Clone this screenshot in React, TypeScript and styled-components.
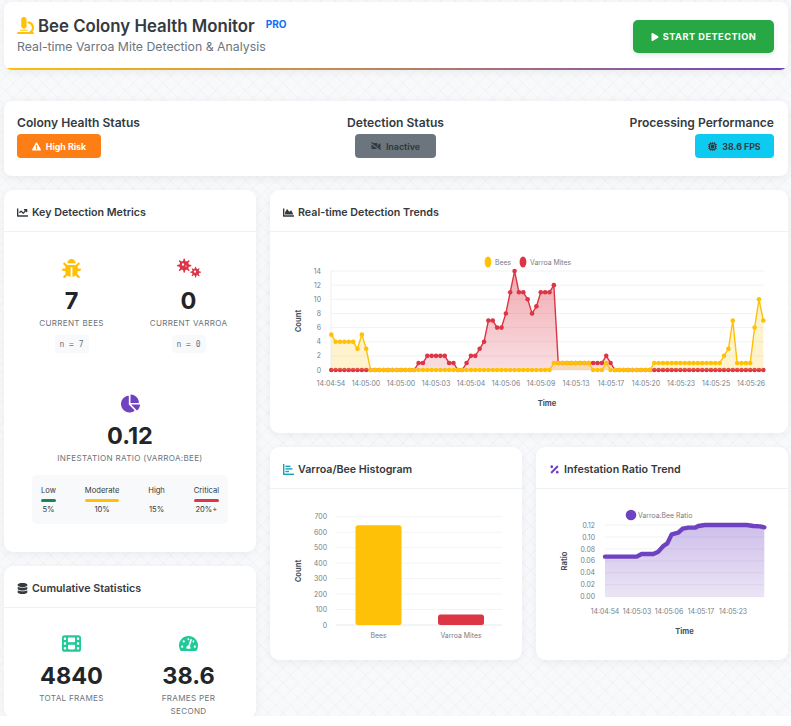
import React from "react";
import styled, { createGlobalStyle } from "styled-components";
import {
  FaBug,
  FaChartArea,
  FaChartLine,
  FaChartPie,
  FaDatabase,
  FaExclamationTriangle,
  FaMicroscope,
  FaPercentage,
  FaPlay,
  FaTachometerAlt,
  FaVideoSlash,
  FaViruses,
} from "react-icons/fa";
import { FaFilm, FaMicrochip } from "react-icons/fa6";

const FONT = `"Inter", "Noto Sans", sans-serif`;

const GlobalStyle = createGlobalStyle`
  html, body { margin: 0; padding: 0; background: #fff; }
  body { font-family: ${FONT}; color: #212529; }
  * { box-sizing: border-box; }
`;

const Page = styled.div`
  height: 716px;
  overflow: hidden;
  padding: 2px 3px 0 4px;
  background-color: #f8f9fb;
  background-image:
    repeating-linear-gradient(45deg, rgba(190, 198, 210, 0) 0, rgba(190, 198, 210, 0.1) 1px, rgba(190, 198, 210, 0) 2px, transparent 10.6px),
    repeating-linear-gradient(-45deg, rgba(190, 198, 210, 0) 0, rgba(190, 198, 210, 0.1) 1px, rgba(190, 198, 210, 0) 2px, transparent 10.6px);
`;

const Header = styled.header`
  height: 68px;
  padding: 0 14px 0 13px;
  display: flex;
  align-items: center;
  justify-content: space-between;
  background: #fff;
  border-radius: 8px;
  position: relative;
  overflow: hidden;
  box-shadow: 0 2px 8px rgba(0, 0, 0, 0.06);
  &::after {
    content: "";
    position: absolute;
    left: 0;
    right: 0;
    bottom: 0;
    height: 2px;
    background: linear-gradient(90deg, #ffc107, #6f42c1);
  }
`;

const Heading = styled.div`
  margin-bottom: 4px;
`;

const TitleRow = styled.div`
  display: flex;
  align-items: center;
  color: #ffc107;
  font-size: 17px;
`;

const Title = styled.h1`
  margin: 0 0 0 4px;
  font-size: 16.8px;
  line-height: 24px;
  font-weight: 600;
  color: #343a40;
`;

const ProTag = styled.span`
  margin: -3px 0 0 11px;
  font-size: 10px;
  font-weight: 700;
  color: #0d6efd;
`;

const Subtitle = styled.p`
  margin: 1px 0 0;
  font-size: 12.3px;
  line-height: 16px;
  color: #6c757d;
`;

const StartButton = styled.button`
  width: 141px;
  height: 33px;
  margin-top: 1px;
  display: flex;
  align-items: center;
  justify-content: center;
  gap: 4px;
  border: 0;
  border-radius: 5px;
  background: #28a745;
  color: #fff;
  font: 700 9.2px ${FONT};
  letter-spacing: 0.5px;
  box-shadow: 0 2px 5px rgba(0, 0, 0, 0.1);
`;

const StatusCard = styled.section`
  height: 75px;
  margin-top: 31px;
  padding: 13px 14px 0 13px;
  display: grid;
  grid-template-columns: 1fr 1fr 1fr;
  background: #fff;
  border-radius: 8px;
  box-shadow: 0 2px 10px rgba(0, 0, 0, 0.07);
`;

const StatusColumn = styled.div<{ $align: string }>`
  display: flex;
  flex-direction: column;
  align-items: ${(p) => p.$align};
`;

const StatusLabel = styled.div`
  font-size: 12.1px;
  line-height: 17px;
  font-weight: 600;
  color: #343a40;
`;

const Badge = styled.div<{ $bg: string; $fg: string; $width: number }>`
  width: ${(p) => p.$width}px;
  height: 24px;
  margin-top: 3px;
  display: flex;
  align-items: center;
  justify-content: center;
  gap: 5px;
  border-radius: 4px;
  background: ${(p) => p.$bg};
  color: ${(p) => p.$fg};
  font-size: 8.8px;
  font-weight: 700;
`;

const Dashboard = styled.div`
  margin-top: 14px;
  display: grid;
  grid-template-columns: 252px 1fr;
  column-gap: 14px;
  align-items: start;
`;

const Column = styled.div`
  display: flex;
  flex-direction: column;
  gap: 14px;
`;

const ChartRow = styled.div`
  display: grid;
  grid-template-columns: 1fr 1fr;
  column-gap: 14px;
`;

const Card = styled.section<{ $height?: number }>`
  height: ${(p) => (p.$height ? `${p.$height}px` : "auto")};
  background: #fff;
  border-radius: 9px;
  box-shadow: 0 2px 10px rgba(0, 0, 0, 0.06);
`;

const CardHeader = styled.div<{ $tint?: string }>`
  height: 42px;
  padding: 3px 13px 0;
  display: flex;
  align-items: center;
  gap: 4px;
  border-bottom: 1px solid #eff1f3;
  color: ${(p) => p.$tint || "#343a40"};
  font-size: 11px;
`;

const CardTitle = styled.h2`
  margin: 0;
  font-size: 10.7px;
  font-weight: 600;
  color: #343a40;
`;

const StatGrid = styled.div<{ $top: number }>`
  padding: ${(p) => p.$top}px 9px 0;
  display: grid;
  grid-template-columns: 1fr 1fr;
`;

const Stat = styled.div`
  display: flex;
  flex-direction: column;
  align-items: center;
  text-align: center;
`;

const StatIcon = styled.div<{ $color: string; $size?: number }>`
  height: 20px;
  display: flex;
  align-items: center;
  color: ${(p) => p.$color};
  font-size: ${(p) => p.$size || 19}px;
`;

const StatValue = styled.div`
  margin-top: 8px;
  font-size: 23.5px;
  line-height: 30px;
  font-weight: 700;
  color: #212529;
`;

const StatLabel = styled.div<{ $width?: number }>`
  max-width: ${(p) => (p.$width ? `${p.$width}px` : "none")};
  margin-top: 1px;
  font-size: 8.1px;
  line-height: 13px;
  letter-spacing: 0.3px;
  text-transform: uppercase;
  color: #6c757d;
`;

const SampleTag = styled.code`
  margin-top: 5px;
  width: 34px;
  height: 18px;
  display: flex;
  align-items: center;
  justify-content: center;
  border-radius: 4px;
  background: #f8f9fa;
  font: 8px "DejaVu Sans Mono", monospace;
  color: #6c757d;
`;

const RatioBlock = styled(Stat)`
  padding-top: 40px;
  padding-bottom: 28px;
`;

const RiskScale = styled.div`
  width: 196px;
  height: 49px;
  margin-top: 10px;
  padding: 10px 9px 0;
  display: flex;
  justify-content: space-between;
  border-radius: 5px;
  background: #f8f9fa;
`;

const RiskItem = styled.div`
  display: flex;
  flex-direction: column;
  align-items: center;
  font-size: 7.6px;
  line-height: 11px;
  color: #343a40;
`;

const RiskBar = styled.div<{ $color: string }>`
  align-self: stretch;
  height: 3px;
  margin: 3px 0 2px;
  border-radius: 2px;
  background: ${(p) => p.$color};
`;

const Chart = styled.svg`
  display: block;
  font-family: ${FONT};
`;

const Tick = styled.text`
  font-size: 6.9px;
  fill: #767e86;
`;

const AxisTitle = styled.text`
  font-size: 7.6px;
  font-weight: 700;
  fill: #495057;
`;

const bees = [
  5, 4, 4, 4, 4, 4, 3, 5, 3, ...Array(42).fill(0), ...Array(9).fill(1), 0, 0, 0, 1,
  ...Array(10).fill(0), ...Array(16).fill(1), 2, 3, 7, 1, 1, 1, 1, 6, 10, 7,
];
const varroa = [
  ...Array(20).fill(0), 1, 1, 2, 2, 2, 2, 2, 1, 1, 0, 0, 1, 2, 2, 3, 4, 7, 7, 6, 6, 8, 11, 14,
  11, 11, 10, 8, 9, 11, 11, 11, 12, ...Array(11).fill(1), 2, 1, ...Array(35).fill(0),
];
const trendLabels = [
  "14:04:54", "14:05:00", "14:05:00", "14:05:03", "14:05:04", "14:05:06", "14:05:09",
  "14:05:13", "14:05:17", "14:05:20", "14:05:23", "14:05:25", "14:05:26",
];

const TX = (i: number) => 61.3 + i * 4.364;
const TY = (v: number) => 138 - v * 7.07;

function Series({ data, color, fill }: { data: number[]; color: string; fill: string }) {
  const line = data.map((v, i) => `${TX(i)},${TY(v)}`).join(" ");
  return (
    <>
      <polygon points={`${TX(0)},${TY(0)} ${line} ${TX(99)},${TY(0)}`} fill={fill} />
      <polyline points={line} fill="none" stroke={color} strokeWidth={1.4} />
      {data.map((v, i) => (
        <circle key={i} cx={TX(i)} cy={TY(v)} r={2.3} fill={color} />
      ))}
    </>
  );
}

function TrendChart() {
  return (
    <Chart width={518} height={190}>
      <defs>
        <linearGradient id="redFill" x1="0" y1="0" x2="0" y2="1">
          <stop offset="0" stopColor="#dc3545" stopOpacity={0.42} />
          <stop offset="1" stopColor="#dc3545" stopOpacity={0.16} />
        </linearGradient>
      </defs>
      {[0, 2, 4, 6, 8, 10, 12, 14].map((v) => (
        <g key={v}>
          <line x1={61} x2={494} y1={TY(v)} y2={TY(v)} stroke="#f1f2f4" />
          <Tick x={51} y={TY(v) + 2.6} textAnchor="end">{v}</Tick>
        </g>
      ))}
      <line x1={61} x2={61} y1={TY(14)} y2={TY(0)} stroke="#eceef0" />
      <Series data={varroa} color="#dc3545" fill="url(#redFill)" />
      <Series data={bees} color="#ffc107" fill="rgba(255,193,7,0.2)" />
      <ellipse cx={218} cy={30} rx={3.4} ry={5.5} fill="#ffc107" />
      <Tick x={225} y={32.5}>Bees</Tick>
      <ellipse cx={253} cy={30} rx={3.4} ry={5.5} fill="#dc3545" />
      <Tick x={260} y={32.5}>Varroa Mites</Tick>
      {trendLabels.map((t, i) => (
        <Tick key={i} x={61 + i * 35} y={154} textAnchor="middle">{t}</Tick>
      ))}
      <AxisTitle x={277} y={174} textAnchor="middle">Time</AxisTitle>
      <AxisTitle transform="translate(30.5 89) rotate(-90)" textAnchor="middle">Count</AxisTitle>
    </Chart>
  );
}

function HistogramChart() {
  const HY = (v: number) => 136 - v * 0.1547;
  return (
    <Chart width={252} height={170}>
      {[0, 100, 200, 300, 400, 500, 600, 700].map((v) => (
        <g key={v}>
          <line x1={66} x2={232} y1={HY(v)} y2={HY(v)} stroke={v ? "#f3f4f6" : "#e6e8ea"} />
          <Tick x={57} y={HY(v) + 2.6} textAnchor="end">{v}</Tick>
        </g>
      ))}
      <rect x={85.5} y={HY(645)} width={46} height={645 * 0.1547} rx={2.5} fill="#ffc107" />
      <rect x={168} y={HY(68)} width={46} height={68 * 0.1547} rx={2.5} fill="#dc3545" />
      <Tick x={108.5} y={148.5} textAnchor="middle">Bees</Tick>
      <Tick x={191} y={148.5} textAnchor="middle">Varroa Mites</Tick>
      <AxisTitle transform="translate(30.5 82) rotate(-90)" textAnchor="middle">Count</AxisTitle>
    </Chart>
  );
}

const ratioPoints = [
  [225, 350], [320, 350], [335, 342], [370, 342], [385, 335], [400, 318], [412, 310],
  [425, 283], [445, 278], [458, 266], [475, 263], [495, 263], [505, 258], [525, 255],
  [650, 255], [670, 258], [690, 259], [703, 262],
].map(([x, y]) => [x / 3 - 6, y / 3 - 49]);

function RatioChart() {
  const line = ratioPoints.map((p) => p.join(",")).join(" ");
  const zero = 107.7;
  const ticks = ["0.00", "0.02", "0.04", "0.06", "0.08", "0.10", "0.12"];
  const ticksX = ["14:04:54", "14:05:03", "14:05:06", "14:05:17", "14:05:23"];
  return (
    <Chart width={252} height={170}>
      <defs>
        <linearGradient id="purpleFill" x1="0" y1="0" x2="0" y2="1">
          <stop offset="0" stopColor="#6f42c1" stopOpacity={0.34} />
          <stop offset="1" stopColor="#6f42c1" stopOpacity={0.14} />
        </linearGradient>
      </defs>
      {ticks.map((t, i) => (
        <g key={t}>
          <line x1={69} x2={228} y1={zero - i * 11.95} y2={zero - i * 11.95} stroke="#f1f2f4" />
          <Tick x={59} y={zero - i * 11.95 + 2.6} textAnchor="end">{t}</Tick>
        </g>
      ))}
      <polygon points={`69,${zero} ${line} 228.3,${zero}`} fill="url(#purpleFill)" />
      <polyline
        points={line}
        fill="none"
        stroke="#6f42c1"
        strokeWidth={4.4}
        strokeLinecap="round"
        strokeLinejoin="round"
      />
      <circle cx={95} cy={26} r={5.3} fill="#6f42c1" />
      <Tick x={102} y={28.5}>Varroa:Bee Ratio</Tick>
      {ticksX.map((t, i) => (
        <Tick key={t} x={69 + i * 32} y={124.5} textAnchor="middle">{t}</Tick>
      ))}
      <AxisTitle x={148.5} y={145} textAnchor="middle">Time</AxisTitle>
      <AxisTitle transform="translate(30.5 72) rotate(-90)" textAnchor="middle">Ratio</AxisTitle>
    </Chart>
  );
}

const HistogramIcon = () => (
  <svg width="11" height="11" viewBox="0 0 11 11" fill="currentColor">
    <rect x="0" y="0" width="1.4" height="11" />
    <rect x="0" y="9.6" width="11" height="1.4" />
    <rect x="2.4" y="1.6" width="5" height="1.4" />
    <rect x="2.4" y="4.2" width="7" height="1.4" />
    <rect x="2.4" y="6.8" width="3.6" height="1.4" />
  </svg>
);

export default function App() {
  return (
    <>
      <GlobalStyle />
      <Page>
        <Header>
          <Heading>
            <TitleRow>
              <FaMicroscope />
              <Title>Bee Colony Health Monitor</Title>
              <ProTag>PRO</ProTag>
            </TitleRow>
            <Subtitle>Real-time Varroa Mite Detection &amp; Analysis</Subtitle>
          </Heading>
          <StartButton>
            <FaPlay size={8} />
            START DETECTION
          </StartButton>
        </Header>

        <StatusCard>
          <StatusColumn $align="flex-start">
            <StatusLabel>Colony Health Status</StatusLabel>
            <Badge $bg="#fd7e14" $fg="#fff" $width={84}>
              <FaExclamationTriangle size={9} />
              High Risk
            </Badge>
          </StatusColumn>
          <StatusColumn $align="center">
            <StatusLabel>Detection Status</StatusLabel>
            <Badge $bg="#6c757d" $fg="#343a40" $width={81}>
              <FaVideoSlash size={10} />
              Inactive
            </Badge>
          </StatusColumn>
          <StatusColumn $align="flex-end">
            <StatusLabel>Processing Performance</StatusLabel>
            <Badge $bg="#0dcaf0" $fg="#343a40" $width={79}>
              <FaMicrochip size={9} />
              38.6 FPS
            </Badge>
          </StatusColumn>
        </StatusCard>

        <Dashboard>
          <Column>
            <Card $height={362}>
              <CardHeader>
                <FaChartLine />
                <CardTitle>Key Detection Metrics</CardTitle>
              </CardHeader>
              <StatGrid $top={26}>
                <Stat>
                  <StatIcon $color="#ffc107"><FaBug /></StatIcon>
                  <StatValue>7</StatValue>
                  <StatLabel>Current Bees</StatLabel>
                  <SampleTag>n = 7</SampleTag>
                </Stat>
                <Stat>
                  <StatIcon $color="#dc3545" $size={24}><FaViruses /></StatIcon>
                  <StatValue>0</StatValue>
                  <StatLabel>Current Varroa</StatLabel>
                  <SampleTag>n = 0</SampleTag>
                </Stat>
              </StatGrid>
              <RatioBlock>
                <StatIcon $color="#6f42c1"><FaChartPie /></StatIcon>
                <StatValue>0.12</StatValue>
                <StatLabel>Infestation Ratio (Varroa:Bee)</StatLabel>
                <RiskScale>
                  <RiskItem>Low<RiskBar $color="#198754" />5%</RiskItem>
                  <RiskItem>Moderate<RiskBar $color="#ffc107" />10%</RiskItem>
                  <RiskItem>High<RiskBar $color="transparent" />15%</RiskItem>
                  <RiskItem>Critical<RiskBar $color="#dc3545" />20%+</RiskItem>
                </RiskScale>
              </RatioBlock>
            </Card>
            <Card>
              <CardHeader>
                <FaDatabase />
                <CardTitle>Cumulative Statistics</CardTitle>
              </CardHeader>
              <StatGrid $top={25}>
                <Stat>
                  <StatIcon $color="#20c997"><FaFilm /></StatIcon>
                  <StatValue>4840</StatValue>
                  <StatLabel>Total Frames</StatLabel>
                </Stat>
                <Stat>
                  <StatIcon $color="#20c997"><FaTachometerAlt /></StatIcon>
                  <StatValue>38.6</StatValue>
                  <StatLabel $width={70}>Frames per second</StatLabel>
                </Stat>
              </StatGrid>
            </Card>
          </Column>
          <Column>
            <Card $height={243}>
              <CardHeader>
                <FaChartArea />
                <CardTitle>Real-time Detection Trends</CardTitle>
              </CardHeader>
              <TrendChart />
            </Card>
            <ChartRow>
              <Card $height={213}>
                <CardHeader $tint="#17a2b8">
                  <HistogramIcon />
                  <CardTitle>Varroa/Bee Histogram</CardTitle>
                </CardHeader>
                <HistogramChart />
              </Card>
              <Card $height={213}>
                <CardHeader $tint="#6f42c1">
                  <FaPercentage />
                  <CardTitle>Infestation Ratio Trend</CardTitle>
                </CardHeader>
                <RatioChart />
              </Card>
            </ChartRow>
          </Column>
        </Dashboard>
      </Page>
    </>
  );
}
